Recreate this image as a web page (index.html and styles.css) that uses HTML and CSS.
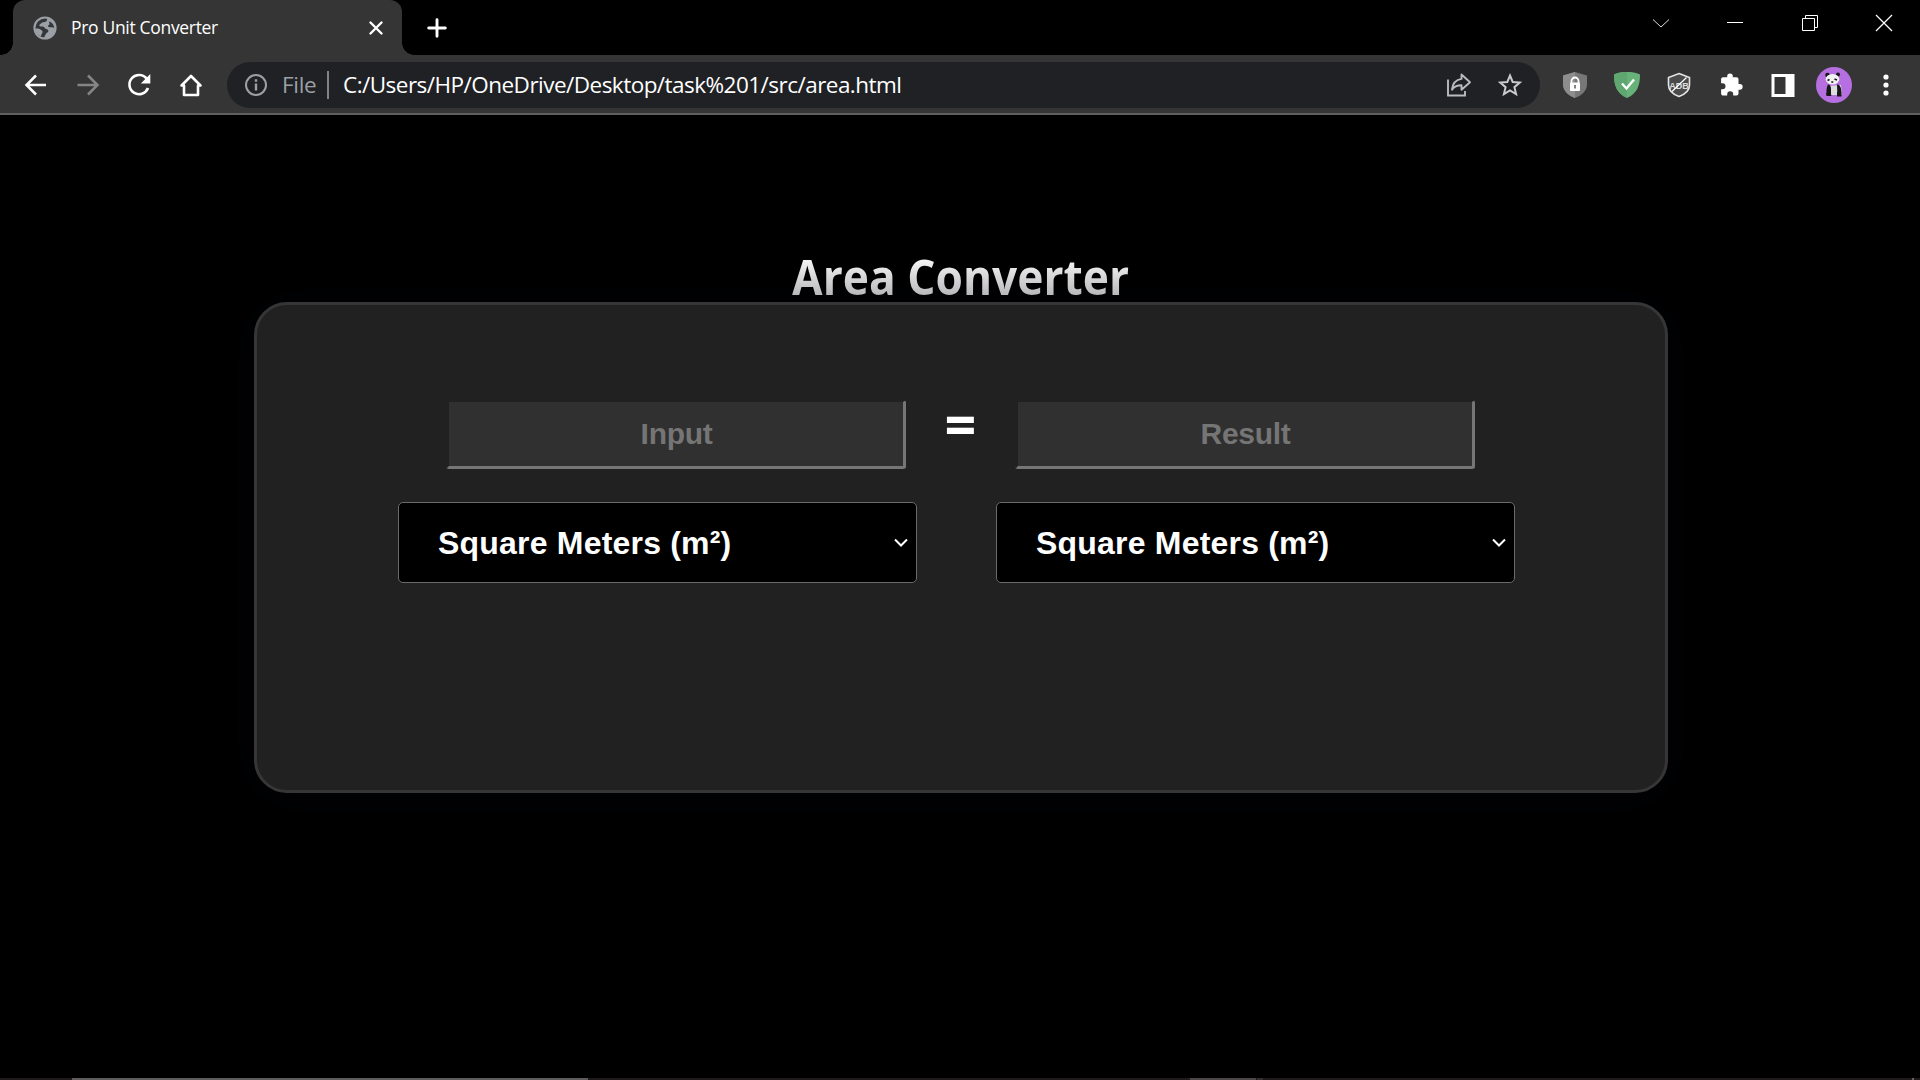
FILE: index.html
```html
<!DOCTYPE html>
<html lang="en">
<head>
<meta charset="utf-8">
<title>Pro Unit Converter</title>
<link rel="stylesheet" href="styles.css">
</head>
<body>
<header class="tabstrip">
  <div class="tab">
    <svg class="favicon" width="24" height="24" viewBox="0 0 24 24"><circle cx="12" cy="12" r="10.6" fill="#34373a" stroke="#9aa0a6" stroke-width="2"/><path fill="#9aa0a6" d="M14 2c.5 2-.2 3.200-1.500 3.800-1.200.6-2.300.2-3.500 1-1.300.9-2.700 1.600-2.700 2.700s1.500 1 3 1c1.800 0 2.200 1.500 3.200 2.200 1 .8 2.900.3 2.900 2.300 0 1.600-1.900 1.500-2.400 2.700-.4 1.300-1.500 2-2 4.800 6 .5 11-4 11-10.500C22 6.500 18 2.500 14 2zM2 12.500c2.200-.2 4.500 0 6.200 1.500.9.900 1.900 1.200 1.300 2.600-.5 1.200-1.300 2-1.400 3.600C4.500 19 2 16 2 12.500z"/><path fill="#34373a" d="M16.200 5.500c-.5 1.300.6 2 .2 3-.4.900-1.700.6-1.400 1.700.5 1.300 2.200 1 3.700 1 1.200 0 1.800.7 2.500.5-.2-2.700-2-5-5-6.200z"/></svg>
    <span class="tab-title">Pro Unit Converter</span>
    <svg class="tab-close" width="14" height="14" viewBox="0 0 14 14"><path d="M1.500 1.500l11 11M12.500 1.500l-11 11" stroke="#fff" stroke-width="2.400" stroke-linecap="round"/></svg>
  </div>
  <svg class="new-tab" width="20" height="20" viewBox="0 0 20 20"><path d="M10 1.700v16.600M1.700 10h16.600" stroke="#fff" stroke-width="2.900" stroke-linecap="round"/></svg>
  <div class="window-controls">
    <svg width="18" height="18" viewBox="0 0 18 18"><path d="M1 5.500l8 7.500 8-7.500" fill="none" stroke="#ddd" stroke-width="1"/></svg>
    <svg width="18" height="18" viewBox="0 0 18 18"><path d="M1 8.500h16" stroke="#fff" stroke-width="1"/></svg>
    <svg width="18" height="18" viewBox="0 0 18 18"><path d="M1.500 4.500h12v12h-12zM4.500 4.500v-3h12v12h-3" fill="none" stroke="#fff" stroke-width="1"/></svg>
    <svg width="18" height="18" viewBox="0 0 18 18"><path d="M1 1l16 16M17 1L1 17" stroke="#fff" stroke-width="1.200"/></svg>
  </div>
</header>
<nav class="toolbar">
  <span class="tool"><svg width="24" height="24" viewBox="0 0 24 24"><path d="M22 12H3M12 2.500L2.500 12l9.500 9.500" fill="none" stroke="#fff" stroke-width="2.500"/></svg></span>
  <span class="tool"><svg width="24" height="24" viewBox="0 0 24 24"><path d="M1.500 12h19M12 2.500l9.500 9.500-9.500 9.500" fill="none" stroke="#858585" stroke-width="2.500"/></svg></span>
  <span class="tool"><svg width="24" height="24" viewBox="0 0 24 24"><path d="M20 6.200A9.600 9.600 0 1 0 21 15" fill="none" stroke="#fff" stroke-width="2.600"/><path d="M23.300 1v9.500h-9.500z" fill="#fff"/></svg></span>
  <span class="tool"><svg width="24" height="24" viewBox="0 0 24 24"><path d="M5 22V12.500H2.500L12 3l9.500 9.500H19V22z" fill="none" stroke="#fff" stroke-width="2.600" stroke-linejoin="round"/></svg></span>
  <div class="omnibox">
    <svg width="24" height="24" viewBox="0 0 24 24"><circle cx="12" cy="12" r="10" fill="none" stroke="#9aa0a6" stroke-width="2"/><path d="M12 10.500V17.500M12 6.300v2.500" stroke="#9aa0a6" stroke-width="2.400"/></svg>
    <span class="scheme">File</span>
    <span class="url">C:/Users/HP/OneDrive/Desktop/task%201/src/area.html</span>
    <svg class="share" width="28" height="26" viewBox="0 0 28 26"><path d="M3 7.500V23.500H20V19" fill="none" stroke="#b9bbbd" stroke-width="1.900"/><path d="M16.500 2.500l8.500 7.700-8.500 7.500v-4.500c-4.500 0-7.500 1.200-9.500 4.500.6-5.500 3.500-10 9.500-10.800z" fill="none" stroke="#b9bbbd" stroke-width="1.900" stroke-linejoin="round"/></svg>
    <svg width="26" height="26" viewBox="0 0 26 26"><path d="M13 3.500l2.700 6.500 7.100.6-5.400 4.600 1.700 6.900-6.100-3.700-6.100 3.700 1.700-6.900-5.400-4.600 7.100-.6z" fill="none" stroke="#c8cacc" stroke-width="2"/></svg>
  </div>
  <span class="tool"><svg width="26" height="28" viewBox="0 0 26 28"><path d="M13 1l12 3.500v9C25 20 19 25 13 27 7 25 1 20 1 13.500v-9z" fill="#777"/><path d="M13 1v26C7 25 1 20 1 13.500v-9z" fill="#8d8d8d"/><path d="M9.500 12.500V10a3.500 3.500 0 0 1 7 0v2.500" fill="none" stroke="#fff" stroke-width="1.800"/><rect x="8" y="11.500" width="10" height="8.500" rx="1" fill="#fff"/><path d="M13 14v3.500" stroke="#777" stroke-width="1.800"/></svg></span>
  <span class="tool"><svg width="28" height="28" viewBox="0 0 28 28"><path d="M14 1c5 0 9 .6 13 2.500C27 15 24 22.500 14 27 4 22.500 1 15 1 3.500 5 1.600 9 1 14 1z" fill="#67b279"/><path d="M14 1v26C4 22.500 1 15 1 3.500 5 1.600 9 1 14 1z" fill="#60a671"/><path d="M9 12.500l4.500 5L21 8.500" fill="none" stroke="#fff" stroke-width="2.400"/></svg></span>
  <span class="tool"><svg width="26" height="28" viewBox="0 0 26 28"><path d="M13 2.500l10.500 4V14c0 5.500-5 9.500-10.500 11.500C7.500 23.500 2.500 19.500 2.500 14V6.500z" fill="#4b4b4b" stroke="#e5e5e5" stroke-width="1.600"/><text x="13" y="17.500" text-anchor="middle" class="adb">ADB</text><path d="M6 20.500L20.500 6.500" stroke="#fff" stroke-width="1.200"/></svg></span>
  <span class="tool"><svg width="26" height="26" viewBox="0 0 26 26"><path d="M20.500 12V7.200c0-1.100-.9-2-2-2H14.800V4.300a2.800 2.800 0 0 0-5.600 0v.9H5.200c-1.200 0-2.100.9-2.100 2v4h1.400a3 3 0 0 1 0 6H3.100v4.300c0 1.200.9 2.100 2.100 2.100h4v-1.300a3 3 0 0 1 6 0v1.300h3.300c1.100 0 2-.9 2-2v-3.900h1.300a2.850 2.850 0 0 0 0-5.700z" fill="#fff"/></svg></span>
  <span class="tool"><svg width="24" height="24" viewBox="0 0 24 24"><path d="M.5 1h23v23H.5zM3.500 4v17h11V4z" fill="#fff" fill-rule="evenodd"/></svg></span>
  <span class="tool"><svg width="36" height="36" viewBox="0 0 36 36"><circle cx="18" cy="18" r="18" fill="#b56fe0"/><circle cx="11.500" cy="8" r="2.300" fill="#171717"/><circle cx="22" cy="7.500" r="2" fill="#171717"/><path d="M12 19l13-1 1 10H11z" fill="#dedede"/><path d="M12 17.500c2 0 3 2 3 4.500s0 6 .3 7H11c-1-3-.5-9 1-11.500zM21 17.500c2.500 0 4 2 4.200 5.500l.4 6h-4.200zM10 26l4-1.500 1.500 4.500h-5zM21 25h4.500v4.500H21z" fill="#171717"/><ellipse cx="16.500" cy="12.300" rx="6.800" ry="5.300" fill="#f2f2f2"/><path d="M11.500 13.500l2-1M18.500 12l2.500 1M15.300 15h2" stroke="#171717" stroke-width="1.500"/></svg></span>
  <span class="tool"><svg width="8" height="24" viewBox="0 0 8 24"><circle cx="4" cy="4" r="2.600" fill="#fff"/><circle cx="4" cy="12" r="2.600" fill="#fff"/><circle cx="4" cy="20" r="2.600" fill="#fff"/></svg></span>
</nav>
<main class="page">
  <h1 class="title"><span>Area Converter</span></h1>
  <section class="card">
    <div class="values">
      <input class="field" type="text" placeholder="Input">
      <span class="equals">=</span>
      <input class="field" type="text" placeholder="Result">
    </div>
    <div class="units">
      <label class="unit"><select><option>Square Meters (m²)</option></select><svg width="16" height="12" viewBox="0 0 16 12"><path d="M2 2.500l6 6 6-6" fill="none" stroke="#fff" stroke-width="2"/></svg></label>
      <label class="unit"><select><option>Square Meters (m²)</option></select><svg width="16" height="12" viewBox="0 0 16 12"><path d="M2 2.500l6 6 6-6" fill="none" stroke="#fff" stroke-width="2"/></svg></label>
    </div>
  </section>
</main>
<footer class="taskbar"><i class="active"></i><i class="running"></i><i class="stacked"></i><i class="edge"></i></footer>
</body>
</html>
```
FILE: styles.css
```css
* { box-sizing: border-box; }
body {
  margin: 0;
  width: 1920px;
  height: 1080px;
  overflow: hidden;
  background: #000;
  color: #fff;
  display: flex;
  flex-direction: column;
  font-family: "Open Sans", sans-serif;
}
svg { display: block; flex: none; }
.tabstrip { height: 55px; flex: none; display: flex; align-items: center; padding-left: 13px; }
.tab {
  position: relative;
  width: 389px;
  height: 55px;
  background: #353535;
  border-radius: 12px 12px 0 0;
  display: flex;
  align-items: center;
  padding: 0 19px 0 20px;
}
.tab::before, .tab::after {
  content: "";
  position: absolute;
  bottom: 0;
  width: 12px;
  height: 12px;
}
.tab::before { left: -12px; background: radial-gradient(circle at 0 0, transparent 11.5px, #353535 12px); }
.tab::after { right: -12px; background: radial-gradient(circle at 100% 0, transparent 11.5px, #353535 12px); }
.tab-title { margin-left: 14px; padding-bottom: 1px; font-size: 17.500px; letter-spacing: -0.320px; white-space: nowrap; flex: 1; }
.new-tab { margin-left: 25px; }
.window-controls { margin-left: auto; height: 46px; align-self: flex-start; display: flex; align-items: center; gap: 56.500px; padding-right: 27px; }
.toolbar {
  height: 60px;
  flex: none;
  background: #353535;
  border-bottom: 2px solid #5f5f5f;
  display: flex;
  align-items: center;
  padding: 0 8px 0 10px;
}
.tool { width: 51.800px; display: flex; justify-content: center; padding-top: 1px; }
.omnibox {
  flex: 1;
  height: 46px;
  margin: 2px 9.400px 0 9.800px;
  border-radius: 23px;
  background: #202124;
  display: flex;
  align-items: center;
  padding: 0 17px;
  white-space: nowrap;
  font-size: 22.500px;
}
.scheme { width: 47px; height: 28px; line-height: 27px; margin-left: 14px; color: #9aa0a6; border-right: 2px solid #808388; letter-spacing: -0.300px; }
.url { margin-left: 14px; letter-spacing: -0.530px; line-height: 25px; padding-bottom: 2px; flex: 1; }
.share { margin-right: 24px; }
.adb { font: bold 9px "Liberation Sans", sans-serif; fill: #ddd; }
.page { flex: 1; display: flex; flex-direction: column; align-items: center; padding: 130px 0 0 2px; }
.title { margin: 0; height: 57px; line-height: 64px; font-family: "Open Sans", sans-serif; font-size: 47.500px; font-weight: 700; letter-spacing: 0; transform: scaleX(.933); white-space: nowrap; }
.title span { background: linear-gradient(#fff 15%, #b5b5b8 82%); -webkit-background-clip: text; background-clip: text; color: transparent; }
.card {
  width: 1414px;
  height: 491px;
  background: #212121;
  border: 3px solid #363636;
  border-radius: 33px;
  box-shadow: 0 3px 48px rgba(31, 38, 80, .1);
  padding: 95px 150px 0 141px;
}
.values { height: 69px; display: flex; align-items: flex-start; padding-left: 48px; }
.field {
  width: 460px;
  height: 69px;
  border: 3px solid;
  border-width: 2px 3px 3px;
  border-color: #212121 #767676 #767676 #212121;
  border-radius: 3px;
  background: #303030;
  text-align: center;
  font: bold 30px "Liberation Sans", Arial, sans-serif;
  letter-spacing: -0.300px;
  outline: none;
  padding: 0 0 0 1px;
}
.field::placeholder { color: #757575; }
.equals { width: 109px; height: 52px; text-align: center; font: 900 60px/47px Lato, sans-serif; }
.units { display: flex; gap: 79px; margin-top: 33px; }
.unit {
  width: 519px;
  height: 81px;
  border: 1px solid #6b6b6b;
  border-radius: 5px;
  background: #000;
  display: flex;
  align-items: center;
  padding: 0 7px 0 39px;
}
.unit select { flex: 1; appearance: none; border: 0; padding: 0; background: none; color: #fff; font: bold 32px "Liberation Sans", Arial, sans-serif; letter-spacing: 0.200px; outline: none; }
.taskbar { height: 2px; flex: none; display: flex; background: #1e1a1b; }
.active { width: 516px; margin-left: 72px; background: #5f5c5d; }
.running { width: 66px; margin-left: 602px; background: #4b4748; }
.stacked { width: 6px; margin-left: 1px; background: #332f30; }
.edge { width: 2px; margin-left: 649px; background: #656263; }
```
